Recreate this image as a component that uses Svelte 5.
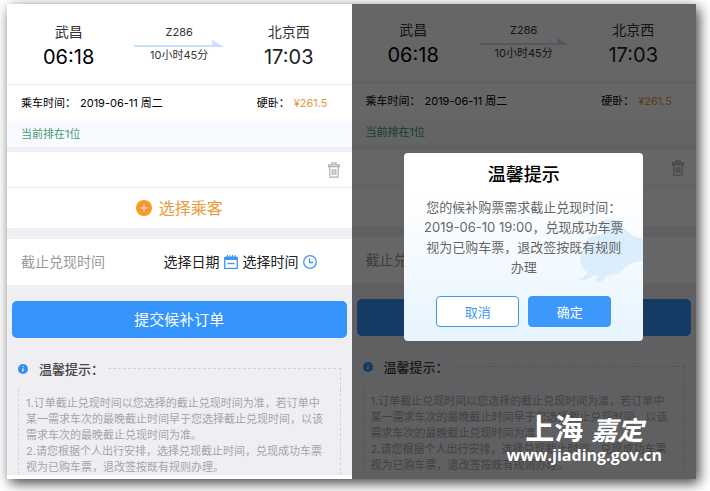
<script>
    const trip = {
        from: "武昌",
        to: "北京西",
        depart: "06:18",
        arrive: "17:03",
        train: "Z286",
        duration: "10小时45分",
        date: "2019-06-11 周二",
        seat: "硬卧",
        price: "¥261.5",
    };

    const tips = [
        "1.订单截止兑现时间以您选择的截止兑现时间为准，若订单中某一需求车次的最晚截止时间早于您选择截止兑现时间，以该需求车次的最晚截止兑现时间为准。",
        "2.请您根据个人出行安排，选择兑现截止时间，兑现成功车票视为已购车票，退改签按既有规则办理。",
    ];
</script>

{#snippet screen(picking)}
    <header class="trip">
        <div class="station">
            <span class="name">{trip.from}</span>
            <span class="time">{trip.depart}</span>
        </div>
        <div class="train">
            <span>{trip.train}</span>
            <svg class="arrow" viewBox="0 0 90 7" aria-hidden="true">
                <path d="M0 5H78V0L90 7H0Z" fill="#cadffb" />
            </svg>
            <span>{trip.duration}</span>
        </div>
        <div class="station arrive">
            <span class="name">{trip.to}</span>
            <span class="time">{trip.arrive}</span>
        </div>
    </header>
    <div class="info">
        <span>乘车时间：</span>
        <span class="date">{trip.date}</span>
        <span>{trip.seat}：</span>
        <span class="price">{trip.price}</span>
    </div>
    <div class="queue">当前排在1位</div>
    <div class="passenger">
        <button class="plain" aria-label="删除">
            <svg width="12" height="16" viewBox="0 0 12 16" fill="none" stroke="#b0b0b3" stroke-width="1.2">
                <path d="M4 2.5V.8H8V2.5M.6 4.6V2.8H11.4V4.6ZM1.6 5L2 15.2H10L10.4 5M4.2 7V13M6 7V13M7.8 7V13" />
            </svg>
        </button>
    </div>
    {#if picking}
        <button class="plain add">
            <svg width="16" height="16" viewBox="0 0 16 16">
                <circle cx="8" cy="8" r="8" fill="#fc962c" />
                <path d="M8 4.5V11.5M4.5 8H11.5" stroke="#fff" />
            </svg>
            选择乘客
        </button>
    {:else}
        <div class="add"></div>
    {/if}
    <div class="deadline">
        <span class="label">截止兑现时间</span>
        {#if picking}
            <button class="plain pick">
                选择日期
                <svg width="14" height="14" viewBox="0 0 14 14" fill="none" stroke="#3d98f2">
                    <path d="M.7 2V13.3H13.3V2" stroke-width="1.3" />
                    <path d="M1 2.5H13M1 4.2H13" stroke-width="1.8" />
                    <path d="M3.5 0V3M6 0V3M8.5 0V3M11 0V3" />
                    <path d="M3.5 8.5H10.5" stroke-width="1.4" />
                </svg>
            </button>
            <button class="plain pick">
                选择时间
                <svg width="14" height="14" viewBox="0 0 14 14" fill="none" stroke="#3d98f2" stroke-width="1.3">
                    <circle cx="7" cy="7" r="6.3" />
                    <path d="M6.5 3.5V7.5H10" />
                </svg>
            </button>
        {/if}
    </div>
    <div class="submit-row">
        <button class="submit" aria-label="提交候补订单">{picking ? "提交候补订单" : ""}</button>
    </div>
    <section class="tips">
        <h2>
            <svg width="10" height="10" viewBox="0 0 10 10">
                <circle cx="5" cy="5" r="5" fill="#328ff0" />
                <path d="M5.2 4.3L4.6 7.6M5.5 2.2L5.4 3" stroke="#fff" stroke-width="1.2" />
            </svg>
            <span>温馨提示：</span>
            <i></i>
        </h2>
        <div class="tips-text">
            {#each tips as tip}
                <p>{tip}</p>
            {/each}
        </div>
    </section>
{/snippet}

<main>
    <div class="screen first">
        {@render screen(true)}
    </div>
    <div class="screen second">
        <div class="behind" inert>
            {@render screen(false)}
        </div>
        <div class="mask">
            <div class="dialog" role="dialog" aria-labelledby="dialog-title">
                <svg class="bird" width="64" height="64" viewBox="0 0 64 64" aria-hidden="true">
                    <path
                        d="M20 3C29-1 39 0 43 6C47 13 55 18 64 20V42C54 43 49 45 43 51C38 56 32 56 28 57L22 63H16L19 57L15 56C10 60 5 62 0 61L9 54C3 50 0 44 2 36C4 29 6 24 10 18C18 17 24 16 26 12C27 8 24 5 20 3Z"
                        fill="#dbeefc"
                    />
                </svg>
                <h1 id="dialog-title">温馨提示</h1>
                <p>您的候补购票需求截止兑现时间：2019-06-10 19:00，兑现成功车票视为已购车票，退改签按既有规则办理</p>
                <div class="actions">
                    <button class="cancel">取消</button>
                    <button class="confirm">确定</button>
                </div>
            </div>
        </div>
        <div class="watermark">
            <div class="brand">上海<em>嘉定</em></div>
            <div class="site">www.jiading.gov.cn</div>
        </div>
    </div>
</main>

<style>
    :global(body) {
        margin: 0;
        background: #fff;
    }

    main {
        display: grid;
        grid-template-columns: 1fr 1fr;
        margin: 4px 14px 12px 7px;
        background: #fff;
        box-shadow: 3px 4px 12px rgba(0, 0, 0, 0.75);
        font-family: Inter, "Noto Sans CJK SC", sans-serif;
        font-size: 11px;
        line-height: 16px;
        color: #222;
    }

    button {
        font: inherit;
        cursor: pointer;
    }

    svg {
        display: block;
        flex-shrink: 0;
    }

    .plain {
        display: flex;
        align-items: center;
        padding: 0;
        border: 0;
        background: none;
        color: inherit;
    }

    .screen {
        position: relative;
        background: #efeef3;
    }

    .first {
        border-bottom: 4px solid #fff;
    }

    .trip {
        display: flex;
        justify-content: space-between;
        height: 81px;
        box-sizing: border-box;
        padding: 18px 38px 0 36px;
        border-bottom: 1px solid #ebebee;
        background: #fff;
    }

    .second .trip {
        height: 79px;
        padding-top: 16px;
    }

    .station {
        display: flex;
        flex-direction: column;
        align-items: center;
        color: #000;
    }

    .station.arrive {
        color: #222;
    }

    .name {
        font-size: 14px;
        line-height: 20px;
        color: #333;
    }

    .time {
        font-size: 20px;
        line-height: 30px;
    }

    .train {
        display: flex;
        flex-direction: column;
        align-items: center;
        padding-top: 2px;
        color: #333;
    }

    .arrow {
        width: 90px;
        height: 7px;
    }

    .info {
        display: flex;
        align-items: center;
        height: 36px;
        padding: 0 24px 0 14px;
        color: #000;
    }

    .info,
    .passenger,
    .add,
    .deadline {
        background: #fff;
    }

    .date {
        margin: 0 auto 0 4px;
    }

    .price {
        margin-left: 4px;
        color: #e59a3c;
    }

    .queue {
        height: 26px;
        padding: 0 14px;
        background: #f7fafe;
        line-height: 26px;
        color: #48976f;
    }

    .passenger {
        display: flex;
        align-items: center;
        justify-content: flex-end;
        height: 35px;
        margin-top: 5px;
        padding: 0 12px;
        border-bottom: 1px solid #ebebee;
    }

    .add {
        justify-content: center;
        gap: 7px;
        width: 100%;
        height: 40px;
        font-size: 16px;
        color: #e99a38;
    }

    .deadline {
        display: flex;
        align-items: center;
        height: 46px;
        margin-top: 11px;
        padding: 0 35px 0 14px;
        font-size: 14px;
    }

    .label {
        margin-right: auto;
        color: #999;
    }

    .pick {
        gap: 4px;
        margin-left: 5px;
    }

    .submit-row {
        padding: 16px 5px 0;
    }

    .submit {
        display: block;
        width: 100%;
        height: 37px;
        border: 0;
        border-radius: 5px;
        background: #3494fb;
        font-size: 15px;
        color: #fff;
    }

    .tips {
        padding: 21px 11px 0;
    }

    .tips h2 {
        display: flex;
        align-items: center;
        margin: 0;
        font-size: 13px;
        font-weight: 500;
        line-height: 20px;
        color: #444;
    }

    .tips h2 span {
        margin-left: 11px;
    }

    .tips h2 i {
        flex: 1;
        align-self: flex-end;
        height: 20px;
        margin: 0 0 -10px 4px;
        border-top: 1px dashed #d3d3d8;
        border-right: 1px dashed #d3d3d8;
    }

    .tips-text {
        margin-top: 10px;
        padding: 6px 14px 0 7px;
        border: dashed #d3d3d8;
        border-width: 0 1px;
        color: #a5a5aa;
    }

    .tips-text p {
        margin: 0;
    }

    .mask {
        position: absolute;
        inset: 0;
        display: flex;
        align-items: flex-start;
        justify-content: center;
        padding-top: 149px;
        background: rgba(0, 0, 0, 0.6);
    }

    .dialog {
        position: relative;
        width: 239px;
        box-sizing: border-box;
        padding: 10px 17px 14px;
        border-radius: 4px;
        background: linear-gradient(#fff 20%, #e7f4fe);
        text-align: center;
    }

    .bird {
        position: absolute;
        top: 66px;
        right: 0;
    }

    .dialog h1 {
        margin: 0;
        font-size: 18px;
        font-weight: 500;
        line-height: 24px;
        color: #000;
    }

    .dialog p {
        position: relative;
        margin: 10px 0 0;
        font-size: 13px;
        line-height: 20px;
        color: #666;
    }

    .actions {
        display: flex;
        justify-content: center;
        gap: 9px;
        margin-top: 19px;
    }

    .actions button {
        width: 83px;
        height: 31px;
        padding: 0;
        border: 1px solid #3d98f2;
        border-radius: 4px;
        background: #fff;
        font-size: 13px;
        color: #3d98f2;
    }

    .actions .confirm {
        background: #3d98fb;
        color: #fff;
    }

    .watermark {
        position: absolute;
        right: 34px;
        bottom: 14px;
        color: #fff;
        text-align: center;
    }

    .brand {
        font-size: 29px;
        font-weight: 700;
        line-height: 28px;
    }

    .brand em {
        margin-left: 8px;
        font-size: 26px;
    }

    .site {
        font-family: "Open Sans", sans-serif;
        font-size: 16px;
        font-weight: 700;
        line-height: 20px;
    }
</style>
